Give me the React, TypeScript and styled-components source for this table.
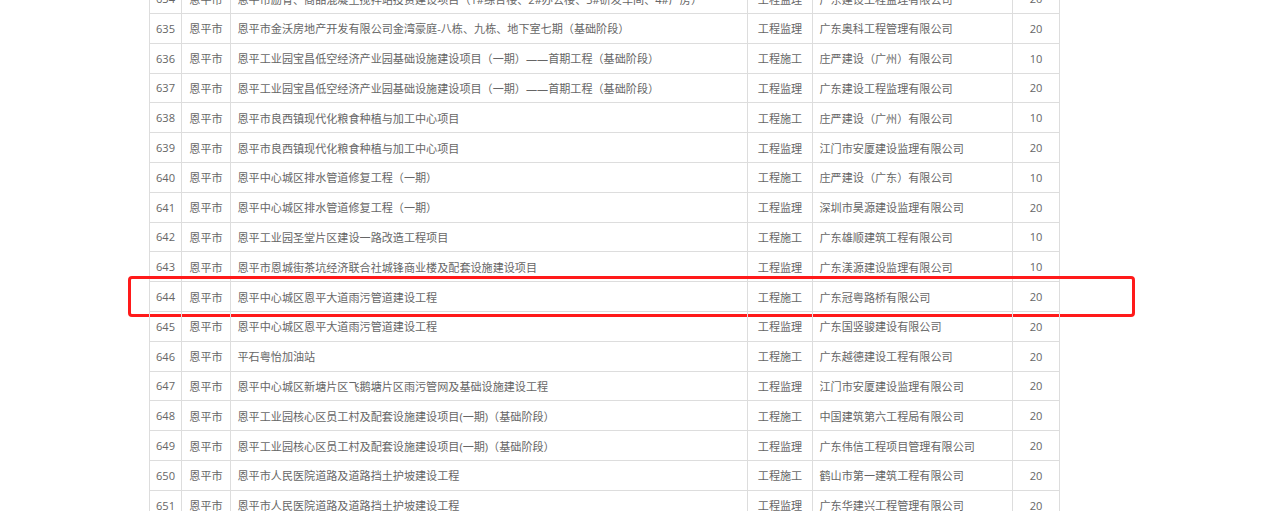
import React from "react";
import styled, { createGlobalStyle } from "styled-components";

const Global = createGlobalStyle`
  html, body { margin: 0; padding: 0; background: #fff; overflow: hidden; }
  body { font-family: "Open Sans", "Noto Sans CJK SC", sans-serif; }
`;

const Page = styled.div`
  padding-left: 149px;
  margin-top: -16.8px;
`;

const Table = styled.div`
  width: 911px;
  display: flex;
  flex-direction: column;
`;

const Row = styled.div<{ $highlight?: boolean }>`
  position: relative;
  display: grid;
  grid-template-columns: 32px 49px 517px 65px 200px 48px;
  height: 29.8px;
  box-sizing: border-box;
  border-top: 1px solid #dddddd;
`;

const Highlight = styled.div`
  position: absolute;
  left: -21px;
  top: -6.2px;
  width: 1007px;
  height: 41px;
  box-sizing: border-box;
  border: 3px solid #ff1a1a;
  border-radius: 4px;
  pointer-events: none;
`;

const Cell = styled.div<{ $align?: "center" | "left"; $last?: boolean }>`
  display: flex;
  align-items: center;
  justify-content: ${(p) => (p.$align === "left" ? "flex-start" : "center")};
  padding: ${(p) => (p.$align === "left" ? "0 0 0 6.5px" : "0")};
  border-left: 1px solid #dddddd;
  border-right: ${(p) => (p.$last ? "1px solid #dddddd" : "none")};
  box-sizing: border-box;
  font-size: 11.1px;
  color: #666666;
  white-space: nowrap;
  overflow: hidden;
`;

type R = [number, string, string, string, string];

const A = "恩平工业园宝昌低空经济产业园基础设施建设项目（一期）——首期工程（基础阶段）";
const B = "恩平市良西镇现代化粮食种植与加工中心项目";
const C = "恩平中心城区排水管道修复工程（一期）";
const D = "恩平中心城区恩平大道雨污管道建设工程";
const E = "恩平工业园核心区员工村及配套设施建设项目(一期)（基础阶段）";
const F = "恩平市人民医院道路及道路挡土护坡建设工程";

const rows: R[] = [
  [634, "恩平市", "恩平市励育、商品混凝土搅拌站投资建设项目（1#综合楼、2#办公楼、3#研发车间、4#厂房）", "工程监理", "广东建设工程监理有限公司"],
  [635, "恩平市", "恩平市金沃房地产开发有限公司金湾豪庭-八栋、九栋、地下室七期（基础阶段）", "工程监理", "广东奥科工程管理有限公司"],
  [636, "恩平市", A, "工程施工", "庄严建设（广州）有限公司"],
  [637, "恩平市", A, "工程监理", "广东建设工程监理有限公司"],
  [638, "恩平市", B, "工程施工", "庄严建设（广州）有限公司"],
  [639, "恩平市", B, "工程监理", "江门市安厦建设监理有限公司"],
  [640, "恩平市", C, "工程施工", "庄严建设（广东）有限公司"],
  [641, "恩平市", C, "工程监理", "深圳市昊源建设监理有限公司"],
  [642, "恩平市", "恩平工业园圣堂片区建设一路改造工程项目", "工程施工", "广东雄顺建筑工程有限公司"],
  [643, "恩平市", "恩平市恩城街茶坑经济联合社城锋商业楼及配套设施建设项目", "工程监理", "广东渼源建设监理有限公司"],
  [644, "恩平市", D, "工程施工", "广东冠粤路桥有限公司"],
  [645, "恩平市", D, "工程监理", "广东国竖骏建设有限公司"],
  [646, "恩平市", "平石粤怡加油站", "工程施工", "广东越德建设工程有限公司"],
  [647, "恩平市", "恩平中心城区新塘片区飞鹅塘片区雨污管网及基础设施建设工程", "工程监理", "江门市安厦建设监理有限公司"],
  [648, "恩平市", E, "工程施工", "中国建筑第六工程局有限公司"],
  [649, "恩平市", E, "工程监理", "广东伟信工程项目管理有限公司"],
  [650, "恩平市", F, "工程施工", "鹤山市第一建筑工程有限公司"],
  [651, "恩平市", F, "工程监理", "广东华建兴工程管理有限公司"],
];

const scores: Record<number, number> = {
  634: 20, 635: 20, 636: 10, 637: 20, 638: 10, 639: 20, 640: 10, 641: 20, 642: 10,
  643: 10, 644: 20, 645: 20, 646: 20, 647: 20, 648: 20, 649: 20, 650: 20, 651: 20,
};

export default function App() {
  return (
    <>
      <Global />
      <Page>
        <Table>
          {rows.map(([n, city, proj, type, comp]) => (
            <Row key={n}>
              <Cell>{n}</Cell>
              <Cell>{city}</Cell>
              <Cell $align="left">{proj}</Cell>
              <Cell>{type}</Cell>
              <Cell $align="left">{comp}</Cell>
              <Cell $last>{scores[n]}</Cell>
              {n === 644 && <Highlight />}
            </Row>
          ))}
        </Table>
      </Page>
    </>
  );
}
